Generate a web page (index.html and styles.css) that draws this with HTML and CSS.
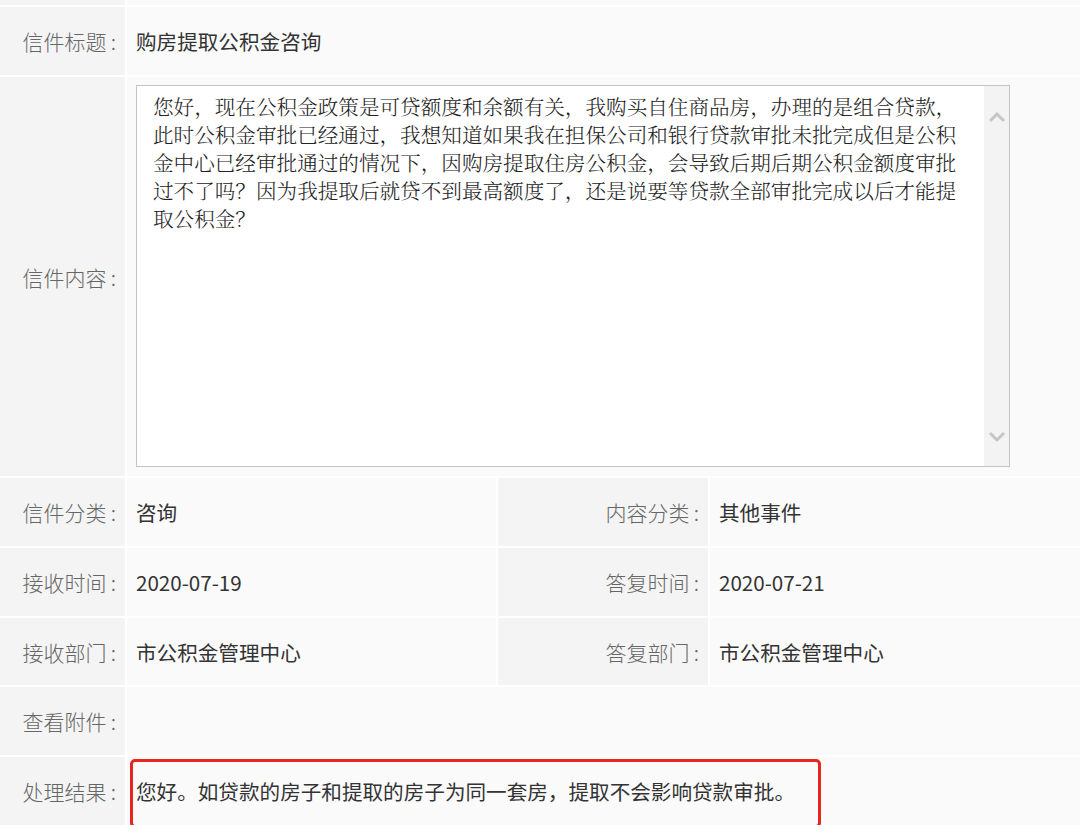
FILE: index.html
```html
<!DOCTYPE html>
<html lang="zh-CN">
<head>
  <meta charset="UTF-8" />
  <meta name="viewport" content="width=device-width, initial-scale=1.0"/>
  <title>信件详情</title>
  <link rel="stylesheet" href="styles.css">
</head>
<body>

  <div class="detalhe">
    <div class="rotulo topo"></div>
    <div class="valor topo largo"></div>

    <div class="rotulo">信件标题&thinsp;:</div>
    <div class="valor largo">购房提取公积金咨询</div>

    <div class="rotulo">信件内容&thinsp;:</div>
    <div class="valor largo conteudo">
      <div class="caixa-texto">
        <div class="texto">您好，现在公积金政策是可贷额度和余额有关，我购买自住商品房，办理的是组合贷款，此时公积金审批已经通过，我想知道如果我在担保公司和银行贷款审批未批完成但是公积金中心已经审批通过的情况下，因购房提取住房公积金，会导致后期后期公积金额度审批过不了吗？因为我提取后就贷不到最高额度了，还是说要等贷款全部审批完成以后才能提取公积金？</div>
        <div class="rolagem">
          <svg width="18" height="12" viewBox="0 0 18 12"><path d="M2 10 L9 3 L16 10" fill="none" stroke="#c6c6c6" stroke-width="3"/></svg>
          <svg width="18" height="12" viewBox="0 0 18 12"><path d="M2 2 L9 9 L16 2" fill="none" stroke="#c6c6c6" stroke-width="3"/></svg>
        </div>
      </div>
    </div>

    <div class="rotulo">信件分类&thinsp;:</div>
    <div class="valor">咨询</div>
    <div class="rotulo">内容分类&thinsp;:</div>
    <div class="valor">其他事件</div>

    <div class="rotulo">接收时间&thinsp;:</div>
    <div class="valor">2020-07-19</div>
    <div class="rotulo">答复时间&thinsp;:</div>
    <div class="valor">2020-07-21</div>

    <div class="rotulo">接收部门&thinsp;:</div>
    <div class="valor">市公积金管理中心</div>
    <div class="rotulo">答复部门&thinsp;:</div>
    <div class="valor">市公积金管理中心</div>

    <div class="rotulo">查看附件&thinsp;:</div>
    <div class="valor largo"></div>

    <div class="rotulo">处理结果&thinsp;:</div>
    <div class="valor largo resultado">
      您好。如贷款的房子和提取的房子为同一套房，提取不会影响贷款审批。
      <div class="destaque"></div>
    </div>
  </div>

</body>
</html>
```

FILE: styles.css
```css
body {
  margin: 0;
  background: white;
  font-family: "Noto Sans CJK SC", "Noto Sans", sans-serif;
}

.detalhe {
  display: grid;
  grid-template-columns: 125px 369px 210px 1fr;
  grid-template-rows: 5px 68px 399px 68px 68px 67px 68px 68px;
  gap: 2px;
}

.rotulo {
  background-color: #f4f4f4;
  color: #666;
  font-size: 21px;
  font-weight: 300;
  display: flex;
  align-items: center;
  justify-content: flex-end;
  padding-right: 9px;
}

.valor {
  background-color: #fafafa;
  color: #333;
  font-size: 20.6px;
  display: flex;
  align-items: center;
  padding-left: 9px;
}

.largo {
  grid-column: 2 / 5;
}

.topo {
  padding: 0;
}

.conteudo {
  align-items: stretch;
  padding: 8px 70px 9px 9px;
}

.caixa-texto {
  flex: 1;
  display: flex;
  background: white;
  border: 1px solid #c4c4c4;
}

.texto {
  flex: 1;
  padding: 6px 12px 0 16px;
  font-family: "Noto Serif CJK SC", "Noto Sans CJK SC", serif;
  font-size: 20.6px;
  font-weight: 300;
  line-height: 28px;
  color: #222;
}

.rolagem {
  width: 25px;
  background-color: #f3f3f3;
  display: flex;
  flex-direction: column;
  justify-content: space-between;
  align-items: center;
  padding: 25px 0 23px;
}

.resultado {
  position: relative;
}

.destaque {
  position: absolute;
  left: 3px;
  top: 2px;
  width: 685px;
  height: 63px;
  border: 3px solid #e8251f;
  border-radius: 5px;
}
```
